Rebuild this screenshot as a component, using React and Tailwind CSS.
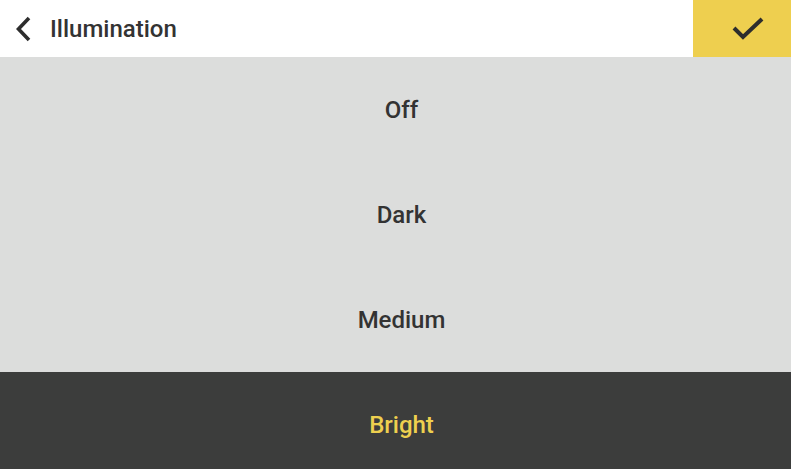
export default function App() {
  const items = ["Off", "Dark", "Medium", "Bright"];
  const selected = "Bright";
  return (
    <div className="w-[791px] h-[469px] overflow-hidden bg-[#dcdddc] flex flex-col" style={{ fontFamily: "Roboto, 'Liberation Sans', sans-serif" }}>
      <div className="h-[57px] shrink-0 bg-white flex items-center">
        <div className="flex items-center flex-1 pl-[14px]">
          <svg width="20" height="26" viewBox="0 0 20 26" className="mr-[16px]">
            <path d="M15 2 L4.5 13 L15 24" fill="none" stroke="#2d2d2d" strokeWidth="3.6" strokeLinecap="butt" strokeLinejoin="miter" />
          </svg>
          <span className="text-[24px] font-medium text-[#333333] leading-none">Illumination</span>
        </div>
        <div className="w-[98px] h-full bg-[#eecf4f] flex items-center justify-center pl-[12px]">
          <svg width="34" height="26" viewBox="0 0 34 26">
            <path d="M3 12 L12 21 L31 3" fill="none" stroke="#2d2d2d" strokeWidth="4" strokeLinejoin="miter" />
          </svg>
        </div>
      </div>
      {items.map((it) => (
        <div
          key={it}
          className={
            "h-[105px] shrink-0 flex items-center justify-center pl-[12px] text-[24px] font-medium " +
            (it === selected ? "bg-[#3c3d3c] text-[#eed04f]" : "text-[#333333]")
          }
        >
          {it}
        </div>
      ))}
    </div>
  );
}
